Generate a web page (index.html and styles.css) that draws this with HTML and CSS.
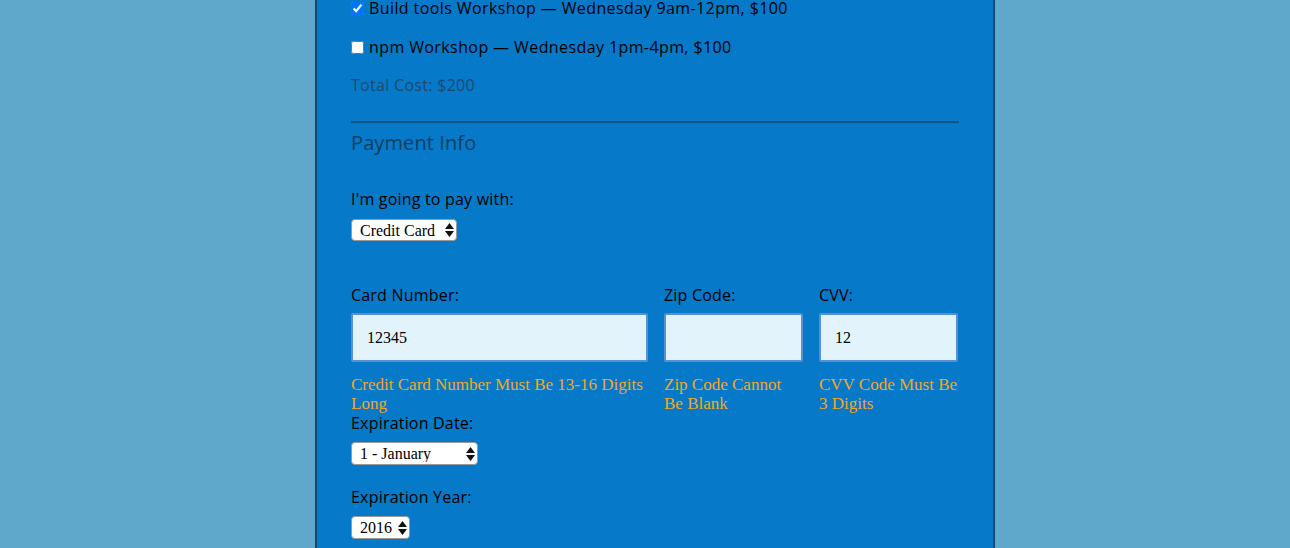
FILE: index.html
```html
<!DOCTYPE html>
<html>
<head>
<meta charset="utf-8">
<link rel="stylesheet" href="styles.css">
</head>
<body>
<form class="container">
  <fieldset class="activities">
    <label class="check"><input type="checkbox" checked> Build tools Workshop — Wednesday 9am-12pm, $100</label>
    <label class="check second"><input type="checkbox"> npm Workshop — Wednesday 1pm-4pm, $100</label>
    <p class="total">Total Cost: $200</p>
  </fieldset>
  <fieldset class="payment">
    <h2 class="legend">Payment Info</h2>
    <label class="lbl pay-lbl" for="payment">I'm going to pay with:</label>
    <div class="sel-wrap">
      <select id="payment" class="sel">
        <option>Credit Card</option>
        <option>PayPal</option>
        <option>Bitcoin</option>
      </select>
      <svg class="arrows" width="9" height="14" viewBox="0 0 9 14"><path d="M4.5 0L9 6H0Z M4.5 14L0 8H9Z" fill="#111"/></svg>
    </div>
    <div class="card-grid">
      <div class="col">
        <label class="lbl" for="cc">Card Number:</label>
        <input id="cc" class="field" type="text" value="12345">
        <span class="err">Credit Card Number Must Be 13-16 Digits Long</span>
      </div>
      <div class="col">
        <label class="lbl" for="zip">Zip Code:</label>
        <input id="zip" class="field" type="text" value="">
        <span class="err">Zip Code Cannot Be Blank</span>
      </div>
      <div class="col">
        <label class="lbl" for="cvv">CVV:</label>
        <input id="cvv" class="field" type="text" value="12">
        <span class="err">CVV Code Must Be 3 Digits</span>
      </div>
    </div>
    <label class="lbl exp-lbl" for="month">Expiration Date:</label>
    <div class="sel-wrap">
      <select id="month" class="sel tall">
        <option>1 - January</option>
        <option>2 - February</option>
        <option>3 - March</option>
        <option>4 - April</option>
        <option>5 - May</option>
        <option>6 - June</option>
        <option>7 - July</option>
        <option>8 - August</option>
        <option>9 - September</option>
        <option>10 - October</option>
        <option>11 - November</option>
        <option>12 - December</option>
      </select>
      <svg class="arrows" width="9" height="14" viewBox="0 0 9 14"><path d="M4.5 0L9 6H0Z M4.5 14L0 8H9Z" fill="#111"/></svg>
    </div>
    <label class="lbl year-lbl" for="year">Expiration Year:</label>
    <div class="sel-wrap">
      <select id="year" class="sel tall year">
        <option>2016</option>
        <option>2017</option>
        <option>2018</option>
        <option>2019</option>
        <option>2020</option>
      </select>
      <svg class="arrows" width="9" height="14" viewBox="0 0 9 14"><path d="M4.5 0L9 6H0Z M4.5 14L0 8H9Z" fill="#111"/></svg>
    </div>
  </fieldset>
</form>
</body>
</html>
```

FILE: styles.css
```css
html, body {
  margin: 0;
  padding: 0;
  height: 100%;
  overflow: hidden;
}
body {
  background: #5fa8cb;
  font-family: "Open Sans", Lato, sans-serif;
  font-size: 16px;
  color: #000;
}
.container {
  box-sizing: border-box;
  width: 680px;
  margin: -2px 0 0 315px;
  min-height: 600px;
  background: #0679c9;
  border-left: 2px solid #0c4b70;
  border-right: 2px solid #0c4b70;
  padding: 0 34px;
}
fieldset {
  border: 0;
  margin: 0;
  padding: 0;
}
.activities {
  border-bottom: 2px solid #0a5584;
  padding-bottom: 26px;
}
.check {
  display: flex;
  align-items: center;
  height: 20px;
  line-height: 20px;
  letter-spacing: 0.4px;
}
.check input {
  margin: 0 5px 0 0;
  width: 13px;
  height: 13px;
}
.second {
  margin-top: 19px;
}
.total {
  margin: 18px 0 0;
  line-height: 20px;
  color: #1b4a6e;
  letter-spacing: 0.3px;
}
.legend {
  margin: 8px 0 0;
  font-size: 20px;
  font-weight: 400;
  line-height: 24px;
  color: #0d3f61;
  letter-spacing: 0.1px;
}
.lbl {
  display: block;
  line-height: 20px;
  letter-spacing: 0.2px;
}
.pay-lbl {
  margin-top: 34px;
}
.sel-wrap {
  position: relative;
  display: inline-block;
  margin-top: 10px;
}
.sel {
  -webkit-appearance: none;
  appearance: none;
  display: block;
  height: 22px;
  padding: 0 20px 0 8px;
  background: #fff;
  border: 1px solid #9a9a9a;
  border-radius: 4px;
  font-family: "Liberation Serif", "Times New Roman", serif;
  font-size: 16px;
  color: #000;
}
.sel.tall {
  height: 23px;
}
.sel.year {
  padding-right: 17px;
}
.arrows {
  position: absolute;
  right: 3px;
  top: 50%;
  margin-top: -7px;
  pointer-events: none;
}
.card-grid {
  display: grid;
  grid-template-columns: 297px 139px 139px;
  column-gap: 16px;
  margin-top: 44px;
}
.col {
  display: flex;
  flex-direction: column;
}
.field {
  box-sizing: border-box;
  width: 100%;
  height: 49px;
  margin-top: 8px;
  padding: 0 0 0 14px;
  background: #e3f3fb;
  border: 2px solid #5a8fd4;
  border-radius: 2px;
  font-family: "Liberation Serif", "Times New Roman", serif;
  font-size: 16px;
  color: #000;
  outline: none;
}
.err {
  margin-top: 13px;
  font-family: "Liberation Serif", "Times New Roman", serif;
  font-size: 17px;
  line-height: 19px;
  color: #f5a623;
}
.exp-lbl {
  margin-top: 0;
}
.exp-lbl + .sel-wrap,
.year-lbl + .sel-wrap {
  margin-top: 9px;
}
.year-lbl {
  margin-top: 22px;
}
```
